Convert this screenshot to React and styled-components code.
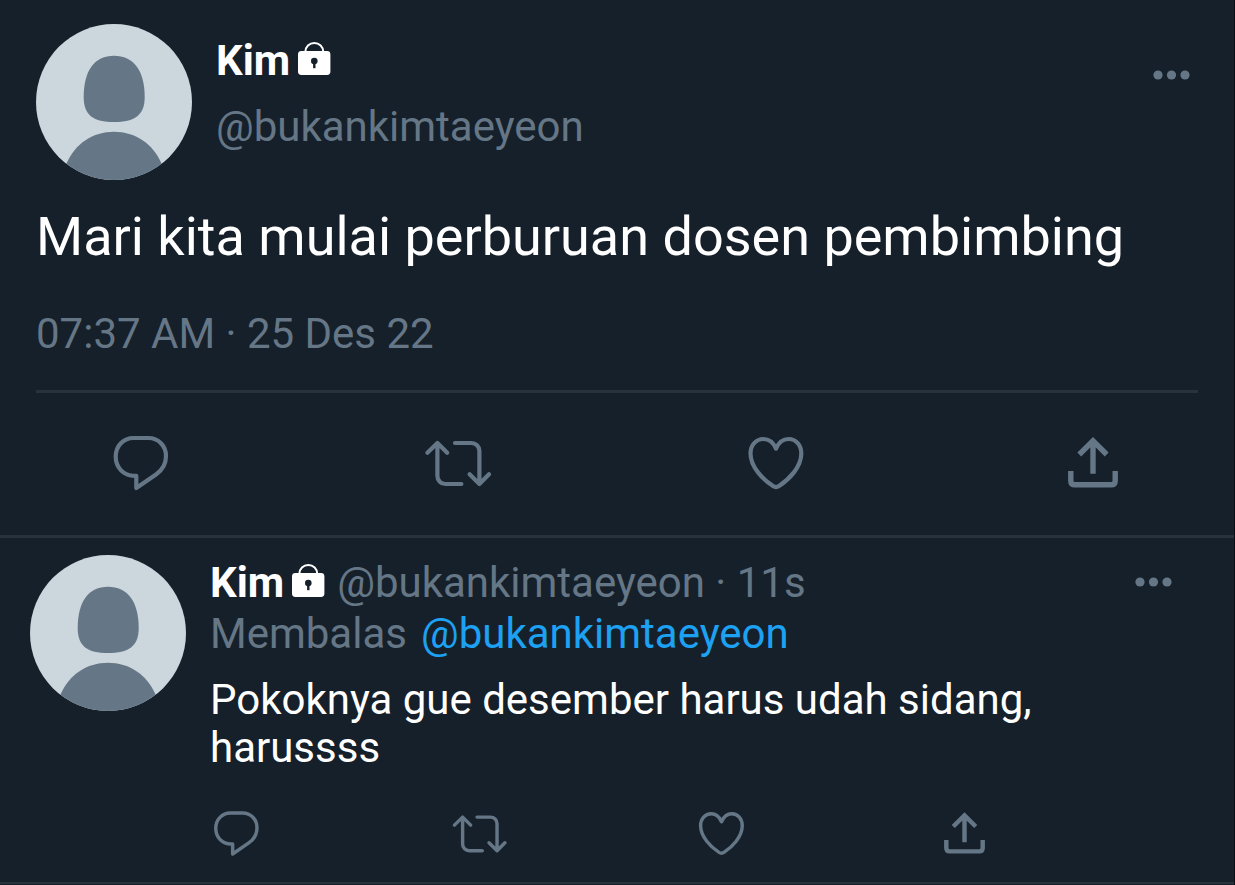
import React from "react";
import styled, { createGlobalStyle } from "styled-components";

const color = {
  bg: "#16202a",
  line: "#28323c",
  muted: "#657786",
  light: "#ccd6dd",
  link: "#1da1f2",
  edge: "#0a0d12",
};

const GlobalStyle = createGlobalStyle`
  * { box-sizing: border-box; }
  html, body { margin: 0; background: ${color.bg}; }
  body { font-family: Roboto, sans-serif; font-size: 42px; color: #fff; }
`;

const Page = styled.main`
  min-height: 100vh;
  overflow: hidden;
  border-right: 1px solid ${color.edge};
`;

const MainTweet = styled.article`
  padding: 24px 36px 36px;
  border-bottom: 3px solid ${color.line};
`;

const Header = styled.header`
  display: flex;
  align-items: flex-start;
  gap: 24px;
  padding-right: 8px;
`;

const AvatarFrame = styled.svg`
  display: block;
  flex: none;
  width: 156px;
  height: 156px;
  border-radius: 50%;
  background: ${color.light};
  fill: ${color.muted};
`;

const Author = styled.div`
  flex: 1;
  min-width: 0;
  padding-top: 4px;
  line-height: 66px;
`;

const NameRow = styled.div`
  display: flex;
  align-items: center;
`;

const Name = styled.strong`
  font-weight: 700;
`;

const LockIcon = styled.svg`
  flex: none;
  width: 33px;
  height: 33px;
  margin: 0 12px 5px 8px;
`;

const Muted = styled.div`
  color: ${color.muted};
`;

const MoreButton = styled.button`
  display: block;
  flex: none;
  height: ${(p) => p.$height}px;
  padding: 0;
  border: 0;
  background: none;
  color: ${color.muted};
  cursor: pointer;

  svg { display: block; width: 37px; height: 10px; }
`;

const MainText = styled.p`
  margin: 25px 0 0;
  font-size: 54px;
  line-height: 64px;
`;

const DateLine = styled.time`
  display: block;
  margin-top: 41px;
  line-height: 48px;
  color: ${color.muted};
`;

const Actions = styled.div`
  display: flex;
  justify-content: space-between;
`;

const MainActions = styled(Actions)`
  margin-top: 32px;
  padding: 34px 69px 0;
  border-top: 3px solid ${color.line};
`;

const ReplyActions = styled(Actions)`
  margin: 32px 178px 0 -3px;
`;

const ActionButton = styled.button`
  padding: 0;
  border: 0;
  background: none;
  color: ${color.muted};
  cursor: pointer;

  svg {
    display: block;
    width: ${(p) => p.$size}px;
    height: ${(p) => p.$size}px;
  }
`;

const ReplyTweet = styled.article`
  display: flex;
  gap: 24px;
  padding: 17px 62px 19px 30px;
  border-bottom: 2px solid ${color.line};
`;

const ReplyBody = styled.div`
  flex: 1;
  min-width: 0;
  padding-top: 2px;
`;

const ReplyHeader = styled.header`
  display: flex;
  justify-content: space-between;
  align-items: flex-start;
  line-height: 52px;
`;

const ReplyingTo = styled.div`
  display: flex;
  gap: 14px;
  line-height: 50px;
  color: ${color.muted};
`;

const Mention = styled.a`
  color: ${color.link};
  text-decoration: none;
`;

const ReplyText = styled.p`
  margin: 17px 0 0;
  line-height: 48px;
`;

const Avatar = () => (
  <AvatarFrame viewBox="0 0 156 156" role="img" aria-label="Kim">
    <path d="M78 31.7C97.5 31.7 108.7 46.5 108.7 73C108.7 91.5 98.5 98 78 98S47.7 91.5 47.7 73C47.7 46.5 58.5 31.7 78 31.7Z" />
    <path d="M24 156L30.5 139.5C39 119.5 57 107.7 78 107.7S117 119.5 125.5 139.5L132 156Z" />
  </AvatarFrame>
);

const Lock = () => (
  <LockIcon viewBox="0 0 33 33" aria-hidden="true">
    <path d="M7.3 10.5V10C7.3 4.8 11.4 1 16.3 1S25.3 4.8 25.3 10V10.5" fill="none" stroke="#fff" strokeWidth="2" />
    <rect y="9" width="32.4" height="24" rx="3.4" fill="#fff" />
    <circle cx="16.3" cy="19" r="3.3" fill={color.bg} />
    <rect x="15.1" y="20" width="2.4" height="6.2" fill={color.bg} />
  </LockIcon>
);

const More = ({ height }) => (
  <MoreButton type="button" aria-label="More" $height={height}>
    <svg viewBox="0 0 37 10" fill="currentColor">
      <circle cx="5" cy="5" r="4.6" />
      <circle cx="18.5" cy="5" r="4.6" />
      <circle cx="32" cy="5" r="4.6" />
    </svg>
  </MoreButton>
);

const actions = [
  {
    label: "Reply",
    width: 4.2,
    cap: "round",
    d: "M28.5 11H43.5C53.5 11 61 19 61 29C61 36 57.5 43 51 47.5L31.3 61V48.8H29.5C18 48.8 10.7 40 10.7 29.5C10.7 19 18.5 11 28.5 11Z",
  },
  {
    label: "Retweet",
    width: 4.2,
    cap: "round",
    d: "M5.4 25.8L15.4 16L25.2 25.8M15.4 16V49A8 8 0 0 0 23.4 57H39.4M33 16H49.4A8 8 0 0 1 57.4 24V57M47.6 47.3L57.4 57L67 47.3",
  },
  {
    label: "Like",
    width: 4.2,
    cap: "round",
    d: "M36 21.6C33.5 16 29 12 23.5 12C16 12 10.5 18 10.5 26.5C10.5 40 23 52.5 33 59Q36 61 39 59C49 52.5 61.3 40 61.3 26.5C61.3 18 56 12 48.5 12C43 12 38.5 16 36 21.6Z",
  },
  {
    label: "Share",
    width: 5.4,
    cap: "butt",
    d: "M22.3 27.5L36 13.9L49.7 27.5M36 14.5V46.7M13.8 44V53.7Q13.8 57.8 17.9 57.8H54.1Q58.2 57.8 58.2 53.7V44",
  },
];

const ActionButtons = ({ size }) =>
  actions.map((a) => (
    <ActionButton key={a.label} type="button" aria-label={a.label} $size={size}>
      <svg
        viewBox="0 0 72 72"
        fill="none"
        stroke="currentColor"
        strokeWidth={a.width}
        strokeLinecap={a.cap}
        strokeLinejoin={a.cap === "round" ? "round" : "miter"}
      >
        <path d={a.d} />
      </svg>
    </ActionButton>
  ));

export default function App() {
  return (
    <>
      <GlobalStyle />
      <Page>
        <MainTweet>
          <Header>
            <Avatar />
            <Author>
              <NameRow>
                <Name>Kim</Name>
                <Lock />
              </NameRow>
              <Muted>@bukankimtaeyeon</Muted>
            </Author>
            <More height={102} />
          </Header>
          <MainText>Mari kita mulai perburuan dosen pembimbing</MainText>
          <DateLine>07:37 AM · 25 Des 22</DateLine>
          <MainActions>
            <ActionButtons size={72} />
          </MainActions>
        </MainTweet>
        <ReplyTweet>
          <Avatar />
          <ReplyBody>
            <ReplyHeader>
              <NameRow>
                <Name>Kim</Name>
                <Lock />
                <Muted>@bukankimtaeyeon · 11s</Muted>
              </NameRow>
              <More height={50} />
            </ReplyHeader>
            <ReplyingTo>
              <span>Membalas</span>
              <Mention href="#bukankimtaeyeon">@bukankimtaeyeon</Mention>
            </ReplyingTo>
            <ReplyText>Pokoknya gue desember harus udah sidang, harussss</ReplyText>
            <ReplyActions>
              <ActionButtons size={59} />
            </ReplyActions>
          </ReplyBody>
        </ReplyTweet>
      </Page>
    </>
  );
}
